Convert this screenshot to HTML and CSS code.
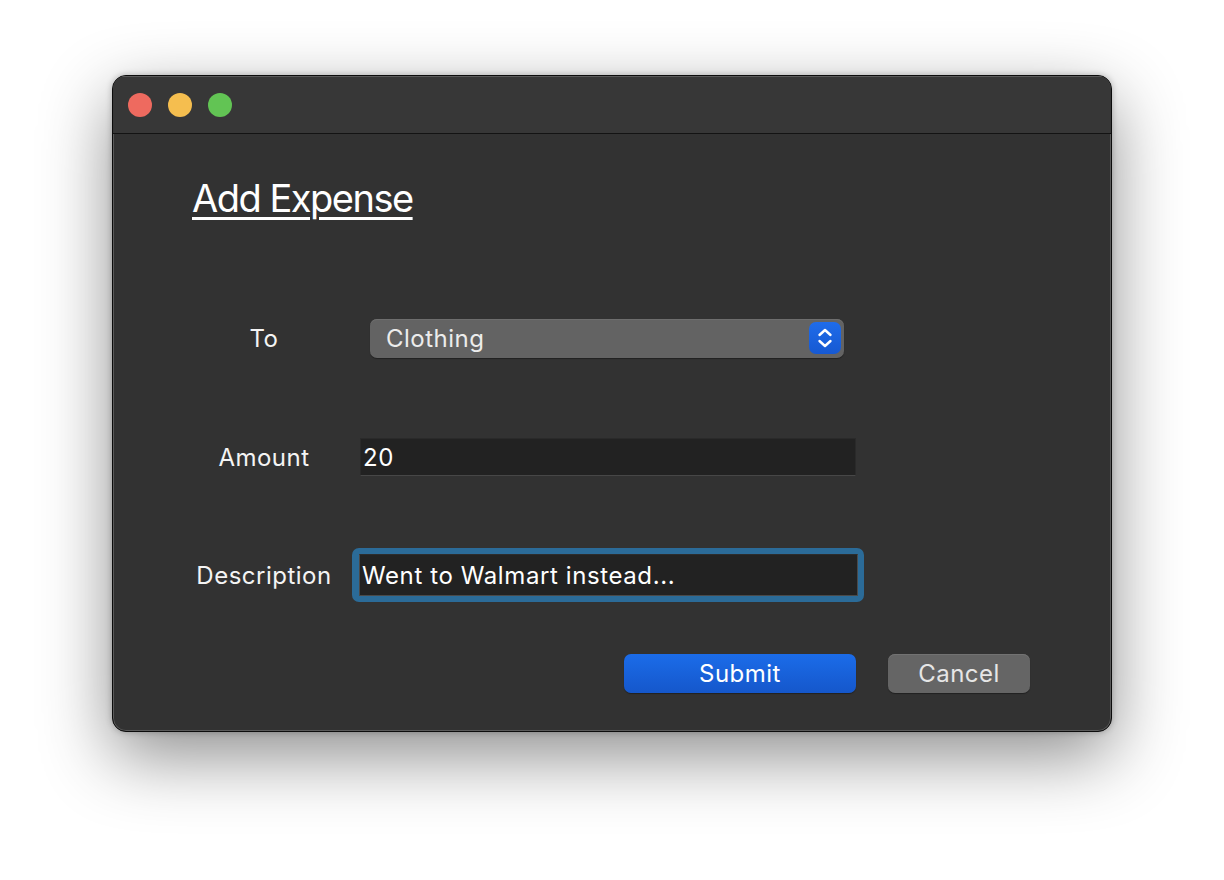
FILE: index.html
```html
<!DOCTYPE html>
<html>
<head>
<meta charset="utf-8">
<link rel="stylesheet" href="styles.css">
</head>
<body>
<div class="window">
  <div class="titlebar">
    <span class="light red"></span>
    <span class="light yellow"></span>
    <span class="light green"></span>
  </div>
  <div class="content">
    <h1 class="title">Add Expense</h1>
    <div class="row row-to">
      <div class="label">To</div>
      <div class="popup">
        <span class="popup-text">Clothing</span>
        <span class="stepper">
          <svg width="32" height="32" viewBox="0 0 32 32">
            <path d="M10.5 13 L16 8 L21.5 13" fill="none" stroke="#fff" stroke-width="2.4" stroke-linecap="round" stroke-linejoin="round"/>
            <path d="M10.5 19 L16 24 L21.5 19" fill="none" stroke="#fff" stroke-width="2.4" stroke-linecap="round" stroke-linejoin="round"/>
          </svg>
        </span>
      </div>
    </div>
    <div class="row row-amount">
      <div class="label">Amount</div>
      <div class="field field-amount">20</div>
    </div>
    <div class="row row-desc">
      <div class="label">Description</div>
      <div class="focus-ring">
        <div class="field field-desc">Went to Walmart instead...</div>
      </div>
    </div>
    <div class="buttons">
      <button class="btn btn-submit">Submit</button>
      <button class="btn btn-cancel">Cancel</button>
    </div>
  </div>
</div>
</body>
</html>
```
FILE: styles.css
```css
html, body {
  margin: 0;
  padding: 0;
  background: #ffffff;
}
body {
  width: 1224px;
  height: 880px;
  overflow: hidden;
  font-family: Inter, "Liberation Sans", sans-serif;
}
.window {
  box-sizing: border-box;
  width: 1000px;
  height: 657px;
  margin: 75px 0 0 112px;
  background: #323232;
  border: 1px solid #0c0c0c;
  border-radius: 14px;
  box-shadow: inset 0 0 0 1px #5a5a5a, 0 24px 70px rgba(0,0,0,0.45), 0 0 6px rgba(0,0,0,0.25);
  overflow: hidden;
}
.titlebar {
  height: 57px;
  background: #373737;
  border-bottom: 1px solid #131313;
  display: flex;
  align-items: center;
  gap: 16px;
  padding-left: 15px;
  box-shadow: inset 0 1px 0 #5a5a5a;
}
.light {
  width: 24px;
  height: 24px;
  border-radius: 50%;
  display: block;
}
.red { background: #ee6a5f; }
.yellow { background: #f5be4f; }
.green { background: #62c454; }

.content {
  display: flex;
  flex-direction: column;
}
.title {
  margin: 44px 0 0 79px;
  height: 40px;
  line-height: 40px;
  font-size: 38px;
  font-weight: 400;
  color: #ffffff;
  letter-spacing: -1.5px;
  text-decoration: underline;
  text-decoration-thickness: 2.5px;
  text-underline-offset: 5px;
  align-self: flex-start;
}
.row {
  display: flex;
  align-items: center;
  height: 40px;
}
.row-to { margin-top: 100px; }
.row-amount { margin-top: 79px; }
.row-desc { margin-top: 78px; }
.label {
  width: 160px;
  margin-left: 71px;
  text-align: center;
  color: #f4f4f4;
  font-size: 24px;
  letter-spacing: 0.5px;
}
.popup {
  margin-left: 26px;
  width: 474px;
  height: 39px;
  box-sizing: border-box;
  background: #636363;
  border-radius: 7px;
  box-shadow: 0 1px 1px rgba(0,0,0,0.35), inset 0 1px 0 #6e6e6e;
  display: flex;
  align-items: center;
  justify-content: space-between;
  padding: 0 3px 0 16px;
}
.popup-text {
  color: #ececec;
  font-size: 24px;
  letter-spacing: 0.5px;
}
.stepper {
  width: 32px;
  height: 32px;
  border-radius: 7px;
  background: linear-gradient(#1f6cea, #1659d2);
  display: block;
}
.stepper svg { display: block; }
.field {
  box-sizing: border-box;
  background: #222222;
  color: #ffffff;
  font-size: 24px;
  letter-spacing: 0.6px;
  display: flex;
  align-items: center;
  padding-left: 2px;
}
.field-amount {
  margin-left: 16px;
  width: 496px;
  height: 38px;
  border: 1px solid #2a2a2a;
  border-bottom-color: #474747;
}
.focus-ring {
  margin-left: 8px;
  box-sizing: border-box;
  width: 512px;
  height: 54px;
  padding: 6px 6px 6px 7px;
  border-radius: 7px;
  background: #2b6b98;
}
.field-desc {
  width: 100%;
  height: 100%;
  border: 1px solid #4a4a4a;
  border-top-color: #2c2c2c;
  padding-left: 2px;
}
.buttons {
  margin-top: 59px;
  display: flex;
  justify-content: flex-end;
  gap: 32px;
  padding-right: 81px;
}
.btn {
  height: 39px;
  border: none;
  border-radius: 7px;
  font-family: Inter, "Liberation Sans", sans-serif;
  font-size: 24px;
  letter-spacing: 0.5px;
  padding: 0;
  box-shadow: 0 1px 1px rgba(0,0,0,0.35);
}
.btn-submit {
  width: 232px;
  background: linear-gradient(#1b6ce9, #1557cb);
  color: #ffffff;
}
.btn-cancel {
  width: 142px;
  background: #656565;
  color: #e6e6e6;
  box-shadow: 0 1px 1px rgba(0,0,0,0.35), inset 0 1px 0 #727272;
}
```
